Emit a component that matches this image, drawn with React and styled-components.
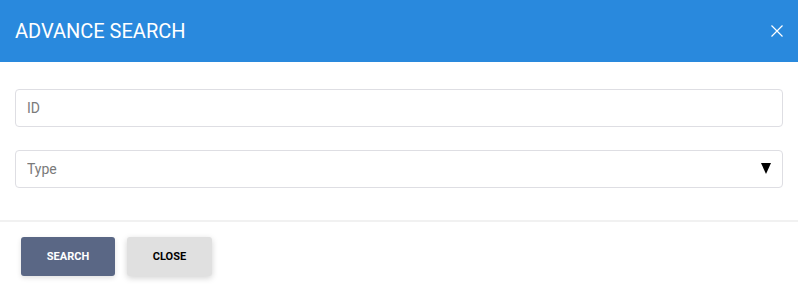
import React from "react";
import styled, { createGlobalStyle } from "styled-components";

const GlobalStyle = createGlobalStyle`
  body {
    margin: 0;
    background: #ffffff;
    font-family: Roboto, "Liberation Sans", sans-serif;
  }
`;

const Modal = styled.div`
  width: 798px;
  background: #ffffff;
  display: flex;
  flex-direction: column;
`;

const Header = styled.div`
  height: 62px;
  flex-shrink: 0;
  background: #2989dd;
  display: flex;
  align-items: center;
  justify-content: space-between;
  padding: 0 15px 0 15px;
  box-sizing: border-box;
`;

const Title = styled.h4`
  margin: 0;
  color: #ffffff;
  font-size: 20px;
  font-weight: 400;
`;

const CloseIcon = styled.button`
  border: none;
  background: transparent;
  padding: 0;
  width: 12px;
  height: 12px;
  display: flex;
  cursor: pointer;
`;

const Body = styled.div`
  padding: 27px 15px 32px;
  display: flex;
  flex-direction: column;
  gap: 23px;
  border-bottom: 2px solid #f1f1f1;
`;

const Field = styled.div`
  position: relative;
  height: 38px;
`;

const Input = styled.input`
  width: 100%;
  height: 38px;
  box-sizing: border-box;
  border: 1px solid #dedee3;
  border-radius: 4px;
  padding: 0 11px;
  font-family: Roboto, "Liberation Sans", sans-serif;
  font-size: 14px;
  color: #333;
  outline: none;

  &::placeholder {
    color: #7a7a7a;
  }
`;

const Arrow = styled.span`
  position: absolute;
  right: 12px;
  top: 13px;
  width: 0;
  height: 0;
  border-left: 5.5px solid transparent;
  border-right: 5.5px solid transparent;
  border-top: 11px solid #000;
  pointer-events: none;
`;

const Footer = styled.div`
  padding: 15px 21px 16px;
  display: flex;
  gap: 12px;
`;

const Button = styled.button`
  height: 39px;
  width: ${(p) => p.$width}px;
  border: none;
  border-radius: 3px;
  background: ${(p) => (p.$primary ? "#5a6785" : "#e0e0e0")};
  color: ${(p) => (p.$primary ? "#ffffff" : "#000000")};
  font-family: Roboto, "Liberation Sans", sans-serif;
  font-size: 11px;
  font-weight: 700;
  box-shadow: ${(p) =>
    p.$primary ? "0 2px 5px rgba(0,0,0,0.12)" : "0 2px 6px rgba(0,0,0,0.18)"};
  cursor: pointer;
`;

const App = () => {
  return (
    <>
      <GlobalStyle />
      <Modal>
        <Header>
          <Title>ADVANCE SEARCH</Title>
          <CloseIcon aria-label="close">
            <svg width="12" height="12" viewBox="0 0 12 12">
              <path d="M0.5 0.5 L11.5 11.5 M11.5 0.5 L0.5 11.5" stroke="#fff" strokeWidth="1.2" />
            </svg>
          </CloseIcon>
        </Header>
        <Body>
          <Field>
            <Input placeholder="ID" />
          </Field>
          <Field>
            <Input placeholder="Type" readOnly />
            <Arrow />
          </Field>
        </Body>
        <Footer>
          <Button $primary $width={94}>SEARCH</Button>
          <Button $width={85}>CLOSE</Button>
        </Footer>
      </Modal>
    </>
  );
};

export default App;
